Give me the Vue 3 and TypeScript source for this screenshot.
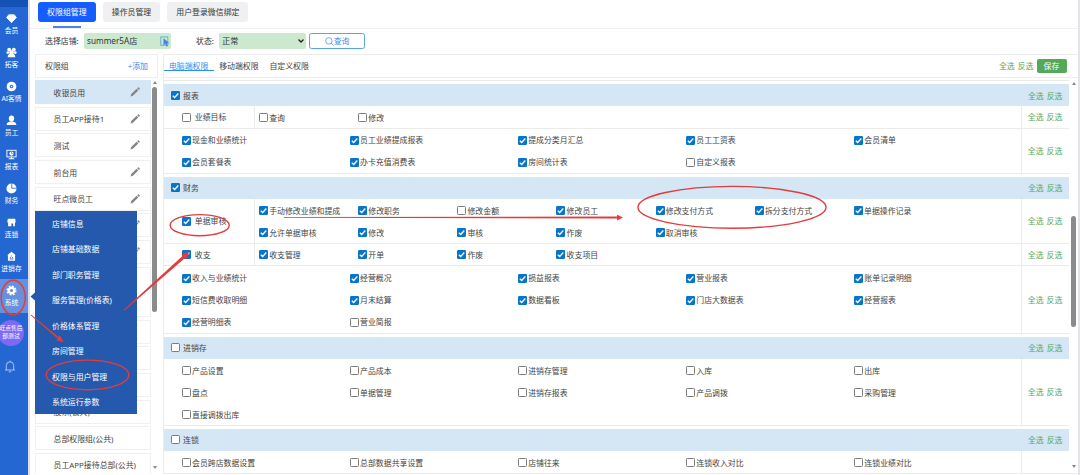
<script setup lang="ts">
interface Perm { name: string; on: boolean }
interface Row { kind: 'sub' | 'flat'; title?: string; on?: boolean; perms: Perm[]; height: number; actions: boolean }
interface Section { title: string; on: boolean; height: number; gap: number; rows: Row[] }

// A leading "-" marks an unchecked permission
const perms = (list: string): Perm[] =>
  list.split(' ').map(s => ({ name: s.replace('-', ''), on: !s.startsWith('-') }))

const sub = (title: string, on: boolean, height: number, list: string): Row =>
  ({ kind: 'sub', title, on, height, perms: perms(list), actions: true })
const flat = (height: number, list: string, actions = true): Row =>
  ({ kind: 'flat', height, perms: perms(list), actions })

const sections: Section[] = [
  { title: '报表', on: true, height: 22.3, gap: 3, rows: [
    sub('业绩目标', false, 22.4, '-查询 -修改'),
    flat(45, '现金和业绩统计 员工业绩提成报表 提成分类月汇总 员工工资表 会员清单 会员套餐表 办卡充值消费表 房间统计表 -自定义报表'),
  ] },
  { title: '财务', on: true, height: 22.5, gap: 3, rows: [
    sub('单据审核', true, 44.4, '手动修改业绩和提成 修改职务 -修改金额 修改员工 修改支付方式 拆分支付方式 单据操作记录 允许单据审核 修改 审核 作废 取消审核'),
    sub('收支', true, 22.8, '收支管理 开单 作废 收支项目'),
    flat(67.2, '收入与业绩统计 经营概况 损益报表 营业报表 账单记录明细 短信费收取明细 月末结算 数据看板 门店大数据表 经营报表 经营明细表 -营业简报'),
  ] },
  { title: '进销存', on: false, height: 22.5, gap: 3, rows: [
    flat(66.8, '-产品设置 -产品成本 -进销存管理 -入库 -出库 -盘点 -单据管理 -进销存报表 -产品调拨 -采购管理 -直接调拨出库'),
  ] },
  { title: '连锁', on: false, height: 22.3, gap: 0, rows: [
    flat(23, '-会员跨店数据设置 -总部数据共享设置 -店铺往来 -连锁收入对比 -连锁业绩对比', false),
  ] },
]

const nav = [
  { id: 'gem', label: '会员' }, { id: 'group', label: '拓客' }, { id: 'ai', label: 'AI客情' },
  { id: 'user', label: '员工' }, { id: 'screen', label: '报表' }, { id: 'pie', label: '财务' },
  { id: 'shop', label: '连锁' }, { id: 'house', label: '进销存' }, { id: 'gear', label: '系统' },
]
const groups = [
  { name: '收银员用', edit: true }, { name: '员工APP接待1', edit: true }, { name: '测试', edit: true },
  { name: '前台用', edit: true }, { name: '旺点微员工', edit: true }, { name: '', edit: true },
  { name: '', edit: true }, { name: '', edit: false, tall: true }, { name: '', edit: false },
  { name: '', edit: false }, { name: '', edit: false }, { name: '股东(公共)', edit: false },
  { name: '总部权限组(公共)', edit: false }, { name: '员工APP接待总部(公共)', edit: false },
]
const menu = ['店铺信息', '店铺基础数据', '部门职务管理', '服务管理(价格表)', '价格体系管理', '房间管理', '权限与用户管理', '系统运行参数']
</script>

<template>
  <div class="app">
    <nav class="side">
      <div class="side-top"></div>
      <div v-for="n in nav" :key="n.id" class="nav" :class="{ current: n.id === 'gear' }">
        <svg viewBox="0 0 12 12" class="nav-icon">
          <path v-if="n.id === 'gem'" d="M3 2h6l2.300 3L6 10.500.7 5z" fill="#fff" stroke="#fff" stroke-linejoin="round" />
          <g v-else-if="n.id === 'group'" fill="#fff">
            <circle cx="3.500" cy="2.800" r="2.100" /><circle cx="8.500" cy="2.800" r="2.100" />
            <circle cx="1.900" cy="6" r="1.500" /><circle cx="10.100" cy="6" r="1.500" />
            <circle cx="6" cy="6.100" r="2.500" /><path d="M1.800 11.200c0-6 8.400-6 8.400 0z" />
          </g>
          <g v-else-if="n.id === 'ai'"><circle cx="6" cy="6" r="5.300" fill="#fff" /><circle cx="6" cy="6" r="1.900" fill="#2567d2" /><path d="M5.400 4.800 7.400 6l-2 1.200z" fill="#fff" /></g>
          <g v-else-if="n.id === 'user'" fill="#fff"><ellipse cx="6" cy="3.800" rx="2.900" ry="3.300" /><path d="M.7 11c0-3 2-3.300 4-4h2.600c2 .7 4 1 4 4z" /></g>
          <g v-else-if="n.id === 'screen'"><rect x="1" y="1.400" width="10" height="7.200" fill="none" stroke="#fff" /><circle cx="6" cy="5" r="2.300" fill="#fff" /><path d="M6 5V2.700M6 5h2" stroke="#2567d2" stroke-width=".6" /><path d="M3 10.700h6M6 8.500v2" stroke="#fff" stroke-width="1.100" /></g>
          <g v-else-if="n.id === 'pie'"><circle cx="6" cy="6" r="5.500" fill="#fff" /><path d="M6.300 0v5.700H12" fill="none" stroke="#2567d2" stroke-width=".9" /></g>
          <path v-else-if="n.id === 'shop'" d="M2 1.800h8L10.600 6H9.700v4.200H7.800V7H5.900v3.200H2.300V6h-.9z" fill="#fff" />
          <g v-else-if="n.id === 'house'"><path d="M6 .8l4.700 3.700H9.900v6.200H2.100V4.500h-.8z" fill="#fff" /><path d="M4 8.700h4M4.800 8V6.500M7.200 8V6.500M6 5v1" stroke="#2567d2" stroke-width=".9" /></g>
          <g v-else><circle cx="6" cy="6" r="3" fill="none" stroke="#fff" stroke-width="2.600" /><circle cx="6" cy="6" r="4.700" fill="none" stroke="#fff" stroke-width="1.600" stroke-dasharray="1.900 1.790" /></g>
        </svg>
        <span>{{ n.label }}</span>
      </div>
      <div class="avatar"><span>旺点售后</span><span>部测试</span></div>
      <svg class="bell" viewBox="0 0 12 13"><path d="M1 10h10M2.300 10V5.500a3.700 3.700 0 0 1 7.400 0V10M6 1.800V.7M4.800 11.800h2.400" fill="none" stroke="#b9cdf0" stroke-width=".9" /></svg>
    </nav>

    <main class="main">
      <header class="tabs">
        <button class="tab active">权限组管理</button>
        <button class="tab">操作员管理</button>
        <button class="tab wide">用户登录微信绑定</button>
      </header>

      <div class="filters">
        <label class="lab shop">选择店铺:</label>
        <div class="field">summer5A店
          <svg viewBox="0 0 10 11" class="pick"><rect x=".8" y=".9" width="7" height="8.300" fill="none" stroke="#6ca6d8" stroke-width=".9" /><path d="M3.500 2v7.500l1.800-1.700 1.200 2.700 1.400-.6-1.200-2.600h2.600z" fill="#3d87dc" /></svg>
        </div>
        <label class="lab state">状态:</label>
        <div class="field">正常
          <svg viewBox="0 0 8 6" class="chev"><path d="M1.500 1.500 4 4l2.500-2.500" fill="none" stroke="#222" stroke-width="1.300" /></svg>
        </div>
        <button class="query">
          <svg viewBox="0 0 10 10"><circle cx="4.300" cy="4.300" r="3.600" /><path d="m6.900 6.900 2.700 2.700" /></svg>查询
        </button>
      </div>

      <div class="body">
        <section class="left">
          <div class="left-head"><span>权限组</span><a>+添加</a></div>
          <div class="left-body">
            <div class="list">
              <div v-for="(g, i) in groups" :key="i" class="group" :class="{ picked: i === 0, tall: g.tall }">
                <span>{{ g.name }}</span>
                <svg v-if="g.edit" viewBox="0 0 10 10"><path d="M.5 9.500 1.200 7 6.600 1.800 8.300 3.500 2.900 8.800zM7.200 1.200 8 .5q.5-.3.900.1l.7.700q.4.400 0 .9l-.7.700z" fill="#858585" /></svg>
              </div>
            </div>
            <div class="bar"><i class="up"></i><b class="thumb-left"></b><i class="down"></i></div>
          </div>
        </section>

        <section class="right">
          <div class="right-head">
            <span class="mode on">电脑端权限</span><span class="mode">移动端权限</span><span class="mode">自定义权限</span>
            <div class="acts top"><a>全选</a><a>反选</a><button>保存</button></div>
          </div>
          <div class="right-body">
            <div class="table">
              <div class="prev"></div>
              <div v-for="s in sections" :key="s.title" :style="{ marginBottom: s.gap + 'px' }">
                <div class="sec" :style="{ height: s.height + 'px' }">
                  <span class="check" :class="{ on: s.on }"><svg v-if="s.on" viewBox="0 0 9 9"><path d="M1.800 4.700 3.700 6.500 7.300 2.500" /></svg></span>
                  <span class="sec-name">{{ s.title }}</span>
                  <div class="acts"><a>全选</a><a>反选</a></div>
                </div>
                <div v-for="(r, i) in s.rows" :key="i" class="row" :style="{ height: r.height + 'px' }">
                  <div v-if="r.kind === 'sub'" class="sub-name">
                    <span class="check" :class="{ on: r.on }"><svg v-if="r.on" viewBox="0 0 9 9"><path d="M1.800 4.700 3.700 6.500 7.300 2.500" /></svg></span>{{ r.title }}
                  </div>
                  <div class="perms" :class="r.kind">
                    <div v-for="p in r.perms" :key="p.name" class="perm">
                      <span class="check" :class="{ on: p.on }"><svg v-if="p.on" viewBox="0 0 9 9"><path d="M1.800 4.700 3.700 6.500 7.300 2.500" /></svg></span>{{ p.name }}
                    </div>
                  </div>
                  <div class="acts cell"><template v-if="r.actions"><a>全选</a><a>反选</a></template></div>
                </div>
              </div>
            </div>
            <div class="bar"><i class="up"></i><b class="thumb-right"></b><i class="down"></i></div>
          </div>
        </section>
      </div>
    </main>
    <div class="edge"></div>

    <div class="popup">
      <div v-for="m in menu" :key="m" class="entry">{{ m }}</div>
    </div>

    <svg class="marks" viewBox="0 0 1080 475">
      <path d="M30.500 296.500 35.500 292v9z" fill="#2559ad" />
      <g fill="none" stroke="#e23c3c" stroke-width="1.400">
        <ellipse cx="13.200" cy="297.500" rx="12" ry="17.300" />
        <ellipse cx="87.500" cy="374.900" rx="41.300" ry="14.800" />
        <ellipse cx="199.700" cy="225.200" rx="29.500" ry="10.600" />
        <ellipse cx="732" cy="207.300" rx="94" ry="20.900" />
      </g>
      <g fill="#e23c3c">
        <path d="M284 217.100 617 216.500V214.700L623 217.600 617 220.500V218.500L284 217.800z" />
        <path d="M123.800 309.700 182.500 256 181.500 254.500 189 251.500 187 259 185 258 124.500 310.500z" />
        <path d="M31 314.600 58.500 337 60 335.200 63.500 342 56.500 340.500 57.700 338.700 30.600 315.200z" />
      </g>
    </svg>
  </div>
</template>

<style>
body { margin: 0; overflow: hidden; }
</style>

<style scoped>
.app { position: relative; display: flex; width: 1080px; height: 475px; overflow: hidden; background: #fff; color: #444; font: 7.9px/12px "Noto Sans", "Noto Sans CJK SC", sans-serif; white-space: nowrap; }
.app * { box-sizing: border-box; }
button { font: inherit; border: 0; padding: 0; }
.side { width: 30px; flex: none; background: #2567d2; border-right: 2px solid #dcdcf0; overflow: hidden; }
.side-top { height: 6.500px; background: #1453b5; }
.nav { height: 34px; display: flex; flex-direction: column; align-items: center; color: #fff; font-size: 6.800px; line-height: 10px; padding: 6.500px 5px 0 0; }
.nav-icon { width: 11px; height: 11px; flex: none; }
.nav span { margin-top: 2px; }
.nav.current { background: #6791dc; }
.avatar { width: 26px; height: 26px; margin: 7px 0 0 -2px; border-radius: 50%; background: #7e69f5; color: #fff; font-size: 5.800px; line-height: 7.500px; display: flex; flex-direction: column; align-items: center; justify-content: center; overflow: hidden; }
.bell { display: block; width: 12px; height: 13px; margin: 14px 0 0 3.500px; }
.main { flex: 1; min-width: 0; display: flex; flex-direction: column; }
.tabs { height: 28.500px; border-bottom: 1px solid #eef0f3; padding: 2px 0 0 8px; display: flex; gap: 7px; }
.tab { position: relative; width: 57.700px; height: 20px; border-radius: 3px; background: #eff0f2; color: #333; }
.tab.wide { width: 81px; }
.tab.active { background: #165dff; color: #fff; }
.tab.active::after { content: ""; position: absolute; left: 15px; right: 15px; bottom: -6px; height: 2px; background: #4a80f2; }
.filters { height: 25px; display: flex; align-items: center; color: #333; }
.lab { flex: none; }
.lab.shop { width: 39px; margin-left: 15px; }
.lab.state { width: 23px; margin-left: 25px; }
.field { width: 87px; height: 16.500px; flex: none; background: #cce8cf; border-radius: 2px; display: flex; align-items: center; justify-content: space-between; padding: 0 1.500px 0 3px; font-size: 8.200px; }
.pick { width: 10px; height: 11px; }
.chev { width: 8px; height: 6px; }
.query { width: 55.500px; height: 16.500px; margin-left: 3.300px; background: #fff; border: 1px solid #5aa2ee; border-radius: 2.500px; color: #3d93e8; display: flex; align-items: center; justify-content: center; }
.query svg { width: 9px; height: 9px; fill: none; stroke: #3d93e8; stroke-width: .8; }
.body { display: flex; gap: 4.500px; height: 420.500px; padding-left: 5px; }
.left { width: 123px; flex: none; display: flex; flex-direction: column; }
.left-head { height: 24px; border: 1px solid #efefef; display: flex; justify-content: space-between; align-items: center; padding: 0 9px; }
.left-head a { color: #3388e8; }
.left-body { height: 396px; display: flex; padding-top: 2.700px; }
.list { width: 115.500px; display: flex; flex-direction: column; gap: 2.640px; overflow: hidden; }
.group { height: 24px; flex: none; border: 1px solid #f0f0f0; display: flex; align-items: center; justify-content: space-between; padding: 0 10px 0 17.500px; color: #444; }
.group span { padding-top: 1px; }
.group.tall { height: 50.600px; }
.group.picked { background: #d5e6f5; border-color: #d5e6f5; }
.group svg { width: 10px; height: 10px; margin-left: auto; }
.bar { width: 7px; flex: none; display: flex; flex-direction: column; align-items: center; margin-left: auto; }
.bar i { border: 2.500px solid transparent; border-top: 0; border-bottom: 3px solid #888; }
.bar i.down { border-bottom: 0; border-top: 3px solid #888; margin-top: auto; }
.bar b { width: 5px; border-radius: 3px; background: #8b8b8b; flex: none; }
.left .bar { padding: 1px 0 5px; width: 7px; }
.thumb-left { height: 225px; margin-top: 3px; }
.right { flex: 1; min-width: 0; border: 1px solid #ececec; border-right: 0; display: flex; flex-direction: column; }
.right-head { height: 23px; display: flex; align-items: center; border-bottom: 1px solid #ececec; }
.mode { padding: 0 5.400px; height: 17px; line-height: 24px; margin-top: -6px; }
.mode.on { color: #2f8fea; border-bottom: 1.500px solid #2f8fea; }
.acts { display: flex; align-items: center; gap: 3px; color: #58a85b; }
.acts.top { margin-left: auto; padding-right: 11.500px; }
.acts button { width: 30px; height: 14px; background: #55a857; color: #fff; border-radius: 2px; }
.right-body { flex: 1; min-height: 0; display: flex; }
.table { width: 905.500px; flex: none; overflow: hidden; }
.prev { height: 3.300px; border-bottom: 1px solid #e9e9e9; margin-bottom: 3.200px; }
.sec { background: #d5e6f5; display: flex; align-items: center; padding: 0 6.500px 0 7px; }
.sec-name { margin-left: 3.500px; padding-top: 1px; }
.sec .acts { margin-left: auto; padding-top: 1px; }
.row { display: flex; border-bottom: 1px solid #ebebeb; }
.sub-name { width: 91.500px; flex: none; display: flex; align-items: center; border-right: 1px solid #ebebeb; padding: 1px 0 0 18.300px; }
.sub-name .check { margin-right: 4px; }
.perms { flex: 1; min-width: 0; display: grid; align-content: start; grid-auto-rows: 22px; }
.perms.flat { grid-template-columns: repeat(4, 168.100px) 1fr; padding: .8px 0 0 18.300px; }
.perms.sub { grid-template-columns: repeat(6, 99.150px) 1fr; padding: .4px 0 0 4px; }
.perm { display: flex; align-items: center; min-width: 0; }
.check { width: 9px; height: 9px; flex: none; border: 1px solid #7d7d7d; border-radius: 1.300px; background: #fff; margin-right: 1.200px; }
.sec .check { margin-right: 0; }
.check.on { border: 0; background: #0874cb; }
.check svg { display: block; width: 9px; height: 9px; fill: none; stroke: #fff; stroke-width: 1.300; }
.acts.cell { width: 48.500px; flex: none; border-left: 1px solid #ebebeb; padding: 1px 0 0 6.300px; }
.right .bar { padding: 4px 0 5px; width: 7px; margin: 0 1px 0 auto; }
.thumb-right { height: 111px; margin-top: 131.500px; }
.edge { width: 2px; background: #e4e4e6; }
.popup { position: absolute; left: 35px; top: 211px; width: 102px; height: 203px; background: #2559ad; color: #fff; }
.entry { height: 25.430px; line-height: 24.430px; padding: 1px 0 0 17px; }
.marks { position: absolute; left: 0; top: 0; width: 1080px; height: 475px; pointer-events: none; }
</style>
